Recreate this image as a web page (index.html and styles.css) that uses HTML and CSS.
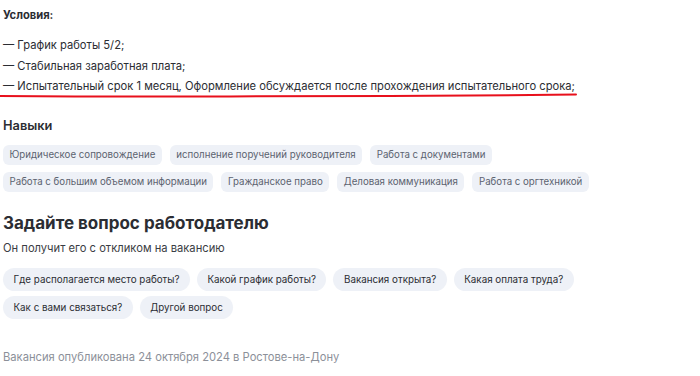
FILE: index.html
```html
<!DOCTYPE html>
<html lang="ru">
<head>
<meta charset="UTF-8">
<meta name="viewport" content="width=device-width, initial-scale=1.0">
<title>Вакансия</title>
<link rel="stylesheet" href="styles.css">
</head>
<body>
  <!-- Условия -->
  <div class="conditions">
    <p class="conditions-title">Условия:</p>
    <p class="cond-line">— График работы 5/2;</p>
    <p class="cond-line">— Стабильная заработная плата;</p>
    <p class="cond-line marked">— Испытательный срок 1 месяц, Оформление обсуждается после прохождения испытательного срока;
      <svg class="mark" width="580" height="6" viewBox="0 0 580 6"><path d="M0 3 L75 3.6 L230 3.4 L390 3 L470 2.6 L576 1.6" stroke="#e8101c" stroke-width="2" fill="none" stroke-linecap="round"/></svg>
    </p>
  </div>

  <!-- Навыки -->
  <div class="skills">
    <h3 class="skills-title">Навыки</h3>
    <div class="tags">
      <span class="tag">Юридическое сопровождение</span>
      <span class="tag">исполнение поручений руководителя</span>
      <span class="tag">Работа с документами</span>
      <span class="tag">Работа с большим объемом информации</span>
      <span class="tag">Гражданское право</span>
      <span class="tag">Деловая коммуникация</span>
      <span class="tag">Работа с оргтехникой</span>
    </div>
  </div>

  <!-- Вопрос работодателю -->
  <div class="ask">
    <h2 class="ask-title">Задайте вопрос работодателю</h2>
    <p class="ask-sub">Он получит его с откликом на вакансию</p>
    <div class="questions">
      <button class="question">Где располагается место работы?</button>
      <button class="question">Какой график работы?</button>
      <button class="question">Вакансия открыта?</button>
      <button class="question">Какая оплата труда?</button>
      <button class="question">Как с вами связаться?</button>
      <button class="question">Другой вопрос</button>
    </div>
  </div>

  <p class="published">Вакансия опубликована 24 октября 2024 в Ростове-на-Дону</p>
</body>
</html>
```

FILE: styles.css
```css
/* page */
body {
  margin: 0;
  padding: 0 0 0 3px;
  background: #fff;
  color: #2b2d33;
  font-family: Inter, "Noto Sans", Arial, sans-serif;
  font-size: 11.2px;
}
p {
  margin: 0;
}
.conditions {
  padding-top: 7px;
}
.conditions-title {
  font-weight: 700;
  line-height: 16px;
  margin-bottom: 12px;
}
.cond-line {
  line-height: 20.5px;
}
.marked {
  position: relative;
}
.mark {
  position: absolute;
  left: -3px;
  top: 17px;
}
.skills {
  margin-top: 19px;
}
.skills-title {
  margin: 0 0 9px;
  font-size: 12.8px;
  font-weight: 600;
  line-height: 20px;
}
.tags {
  display: flex;
  flex-wrap: wrap;
  gap: 7px 8px;
}
.tag {
  background: #eef1f7;
  color: #5c6370;
  font-size: 9.7px;
  line-height: 20px;
  padding: 0 6.5px;
  border-radius: 6px;
}
.ask {
  margin-top: 18px;
}
.ask-title {
  margin: 0;
  font-size: 17px;
  font-weight: 700;
  line-height: 26px;
}
.ask-sub {
  margin-top: 3px;
  line-height: 18px;
  color: #3a3d44;
}
.questions {
  display: flex;
  flex-wrap: wrap;
  gap: 5px 7px;
  margin-top: 11px;
  max-width: 600px;
}
.question {
  border: none;
  background: #eef1f7;
  color: #2b2d33;
  font-family: inherit;
  font-size: 9.8px;
  line-height: 23px;
  padding: 0 10.5px;
  border-radius: 12px;
}
.published {
  margin-top: 29px;
  color: #8c9099;
  line-height: 18px;
}
```
